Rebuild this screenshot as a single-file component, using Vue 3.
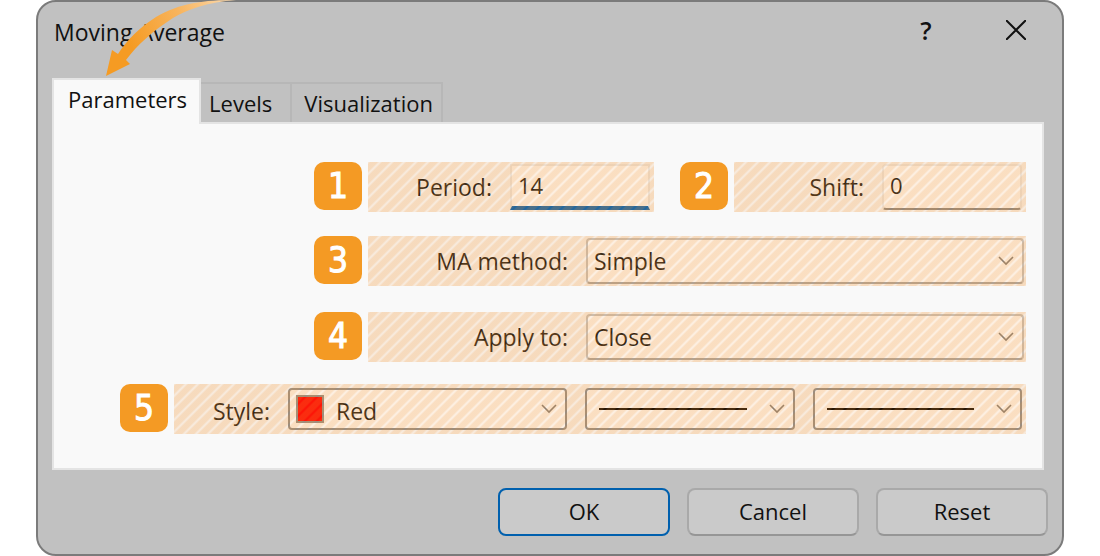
<template>
  <form class="dialog" @submit.prevent>
    <svg class="arrow" width="210" height="80" viewBox="0 0 210 80" aria-hidden="true">
      <defs>
        <linearGradient id="arrowFade" gradientUnits="userSpaceOnUse" x1="95" y1="46" x2="200" y2="0">
          <stop offset="0" stop-color="#f59b23" />
          <stop offset="0.5" stop-color="#f8b45d" />
          <stop offset="1" stop-color="#fbdcb4" />
        </linearGradient>
      </defs>
      <path
        d="M70 76 L76 50 L82 54 C91 40 104 27 120 17 C144 3 168 0 200 0 C172 2 152 9 137 18 C118 30 101 45 90 60 L94 64 Z"
        fill="url(#arrowFade)"
      />
    </svg>

    <header class="title-bar">
      <h1 class="title">Moving Average</h1>
      <button type="button" class="title-btn" aria-label="Help">?</button>
      <button type="button" class="title-btn" aria-label="Close">
        <svg width="20" height="20" viewBox="0 0 20 20">
          <path d="M0 0 L20 20 M20 0 L0 20" stroke="#111" stroke-width="2" fill="none" />
        </svg>
      </button>
    </header>

    <nav class="tabs" role="tablist">
      <button
        v-for="tab in tabs"
        :key="tab"
        type="button"
        role="tab"
        class="tab"
        :class="{ active: tab === activeTab }"
        :aria-selected="tab === activeTab"
        @click="activeTab = tab"
      >
        {{ tab }}
      </button>
    </nav>

    <section class="panel">
      <div class="row">
        <div class="group group-period">
          <span class="badge">1</span>
          <div class="field">
            <label for="period">Period:</label>
            <input id="period" v-model="period" class="text-input focused" type="text" />
          </div>
        </div>
        <div class="group group-shift">
          <span class="badge">2</span>
          <div class="field">
            <label for="shift">Shift:</label>
            <input id="shift" v-model="shift" class="text-input" type="text" />
          </div>
        </div>
      </div>

      <div class="row row-method">
        <div class="group">
          <span class="badge">3</span>
          <div class="field field-wide">
            <label for="method">MA method:</label>
            <div class="select-box">
              <select id="method" v-model="method">
                <option>Simple</option>
              </select>
              <svg class="chevron" viewBox="0 0 16 10"><path d="M1 1 L8 8 L15 1" /></svg>
            </div>
          </div>
        </div>
      </div>

      <div class="row row-apply">
        <div class="group">
          <span class="badge">4</span>
          <div class="field field-wide">
            <label for="apply">Apply to:</label>
            <div class="select-box">
              <select id="apply" v-model="applyTo">
                <option>Close</option>
              </select>
              <svg class="chevron" viewBox="0 0 16 10"><path d="M1 1 L8 8 L15 1" /></svg>
            </div>
          </div>
        </div>
      </div>

      <div class="row row-style">
        <div class="group">
          <span class="badge">5</span>
          <div class="field field-style">
            <label for="color">Style:</label>
            <div class="select-box">
              <span class="swatch"></span>
              <select id="color" v-model="color">
                <option>Red</option>
              </select>
              <svg class="chevron" viewBox="0 0 16 10"><path d="M1 1 L8 8 L15 1" /></svg>
            </div>
            <div v-for="name in lineSelects" :key="name" class="select-box line-box">
              <select :aria-label="name">
                <option value="1"></option>
              </select>
              <span class="line"></span>
              <svg class="chevron" viewBox="0 0 16 10"><path d="M1 1 L8 8 L15 1" /></svg>
            </div>
          </div>
        </div>
      </div>
    </section>

    <footer class="actions">
      <button type="submit" class="btn primary">OK</button>
      <button type="button" class="btn">Cancel</button>
      <button type="button" class="btn">Reset</button>
    </footer>
  </form>
</template>

<script setup>
  import { ref } from 'vue';

  const tabs = ['Parameters', 'Levels', 'Visualization'];
  const activeTab = ref('Parameters');

  const period = ref('14');
  const shift = ref('0');
  const method = ref('Simple');
  const applyTo = ref('Close');
  const color = ref('Red');
  const lineSelects = ['Line type', 'Line width'];
</script>

<style>
  body {
    margin: 0;
    background: #fff;
  }
</style>

<style scoped>
  * {
    box-sizing: border-box;
  }

  .dialog {
    position: relative;
    display: flex;
    flex-direction: column;
    min-height: 100vh;
    margin: 0 36px;
    padding: 0 14px 18px;
    border: 2px solid #7b7b7b;
    border-radius: 20px;
    background: #c1c1c1;
    color: #111;
    font-family: 'Open Sans', 'Noto Sans', sans-serif;
    font-size: 23px;
    line-height: 32px;
  }

  button,
  input,
  select {
    margin: 0;
    padding: 0;
    border: 0;
    background: none;
    color: inherit;
    font: inherit;
    outline: none;
  }

  .arrow {
    position: absolute;
    top: -2px;
    left: -2px;
    pointer-events: none;
  }

  /* 标题栏 */
  .title-bar {
    display: flex;
    align-items: center;
    height: 60px;
    margin-bottom: 16px;
  }

  .title {
    flex: 1;
    margin: 0 0 0 2px;
    font-size: 23px;
    font-weight: 400;
  }

  .title-btn {
    display: flex;
    align-items: center;
    justify-content: center;
    width: 58px;
    height: 56px;
    margin-left: 32px;
    padding-bottom: 4px;
    font-size: 25px;
    font-weight: 600;
  }

  .title-btn:last-child {
    margin-right: 3px;
  }

  /* 选项卡 */
  .tabs {
    display: flex;
    align-items: flex-end;
    height: 44px;
  }

  .tab {
    height: 40px;
    padding: 0 8px 0 12px;
    border: 2px solid #b7b7b7;
    border-width: 2px 2px 0 0;
    font-size: 22px;
  }

  .tab.active {
    z-index: 1;
    height: 46px;
    margin-bottom: -2px;
    padding: 0 12px 6px 14px;
    border: 2px solid #e4e4e4;
    border-bottom: 0;
    background: #f9f9f9;
  }

  .tab.active + .tab {
    padding: 0 18px 0 8px;
  }

  /* 内容面板 */
  .panel {
    flex: 1;
    margin-right: 4px;
    padding: 38px 16px 34px 66px;
    border: 2px solid #e4e4e4;
    background: #f9f9f9;
  }

  .row {
    display: flex;
    gap: 26px;
    margin: 0 0 24px 194px;
  }

  .row-method {
    margin-bottom: 26px;
  }

  .row-apply {
    margin-bottom: 22px;
  }

  .row-style {
    margin: 0;
  }

  .group {
    display: flex;
    flex: 1;
    gap: 6px;
  }

  .group-period {
    flex: 340 1 0;
  }

  .group-shift {
    flex: 346 1 0;
  }

  .badge {
    flex-shrink: 0;
    width: 48px;
    height: 48px;
    border-radius: 10px;
    background: #f49a24;
    color: #fff;
    font-family: 'DejaVu Sans Condensed', 'DejaVu Sans', sans-serif;
    font-size: 35px;
    line-height: 48px;
    text-align: center;
    -webkit-text-stroke: 1px #fff;
  }

  .field {
    position: relative;
    display: flex;
    flex: 1;
    align-items: center;
    gap: 18px;
    height: 50px;
    padding-right: 4px;
  }

  /* 斜纹高亮覆盖层 */
  .field::after {
    content: '';
    position: absolute;
    inset: 0;
    background: linear-gradient(
        135deg,
        rgba(240, 147, 50, 0.14) 0 2%,
        rgba(240, 147, 50, 0.3) 11% 39%,
        rgba(240, 147, 50, 0.14) 48% 52%,
        rgba(240, 147, 50, 0.3) 61% 89%,
        rgba(240, 147, 50, 0.14) 98%
      )
      0 0 / 12px 12px;
    pointer-events: none;
  }

  .field label {
    flex: 1;
    text-align: right;
    white-space: nowrap;
  }

  .text-input {
    width: 140px;
    height: 46px;
    padding: 0 6px 4px;
    border: 2px solid #ececec;
    border-bottom-color: #868686;
    border-radius: 4px;
    background: #fff;
    font-size: 22px;
  }

  .text-input.focused {
    border-bottom: 4px solid #005fb0;
    border-radius: 0;
    padding-bottom: 2px;
  }

  .field-wide {
    padding-right: 2px;
  }

  .field-wide label {
    flex: 0 0 200px;
  }

  .select-box {
    display: flex;
    flex: 1;
    align-items: center;
    height: 46px;
    padding: 0 8px 0 6px;
    border: 2px solid #c4c4c4;
    border-bottom-color: #a6a6a6;
    border-radius: 4px;
    background: #fff;
  }

  .select-box select {
    flex: 1;
    min-width: 0;
    appearance: none;
  }

  .chevron {
    flex-shrink: 0;
    width: 16px;
    height: 10px;
    fill: none;
    stroke: #7c7c7c;
    stroke-width: 1.6;
  }

  .field-style {
    display: grid;
    grid-template-columns: 96px 280fr 210fr 210fr;
  }

  .field-style label,
  .field-style select {
    padding-top: 4px;
  }

  .field-style .select-box {
    height: 42px;
    border-color: #8c8c8c;
  }

  .line-box {
    position: relative;
  }

  .swatch {
    width: 28px;
    height: 28px;
    margin-right: 12px;
    border: 2px solid #8c8c8c;
    background: #ff0000;
  }

  .line {
    position: absolute;
    left: 12px;
    right: 46px;
    height: 2px;
    background: #000;
    pointer-events: none;
  }

  /* 底部按钮 */
  .actions {
    display: flex;
    justify-content: flex-end;
    gap: 17px;
    margin-top: 18px;
  }

  .btn {
    width: 172px;
    height: 48px;
    padding-bottom: 2px;
    border: 2px solid #a9a9a9;
    border-bottom-color: #969696;
    border-radius: 8px;
    background: #cacaca;
    font-size: 22px;
  }

  .btn.primary {
    border-color: #0060ae;
  }
</style>
